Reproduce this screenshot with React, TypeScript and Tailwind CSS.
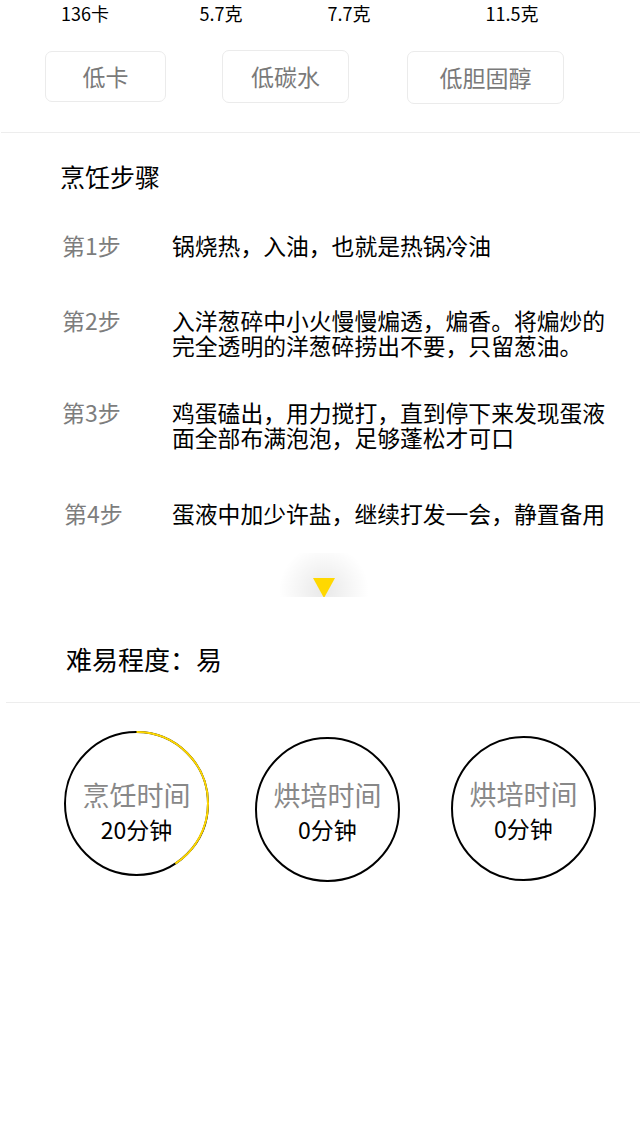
import React from "react";

const font = "font-['Noto_Sans_CJK_SC','Noto_Sans_CJK_JP',sans-serif]";

function Ring({ progress }: { progress?: number }) {
  const r = 71.5;
  const c = 2 * Math.PI * r;
  return (
    <svg width="145" height="145" viewBox="0 0 145 145" className="block">
      <circle cx="72.5" cy="72.5" r={r} fill="none" stroke="#000" strokeWidth="2" />
      {progress ? (
        <circle
          cx="72.5"
          cy="72.5"
          r={r}
          fill="none"
          stroke="#ffd800"
          strokeWidth="2"
          strokeDasharray={`${c * progress} ${c}`}
          transform="rotate(-90 72.5 72.5)"
        />
      ) : null}
    </svg>
  );
}

function TimeCircle({ title, value, progress, cls, pad }: { title: string; value: string; progress?: number; cls: string; pad: string }) {
  return (
    <div className={`relative w-[145px] h-[145px] ${cls}`}>
      <Ring progress={progress} />
      <div className={`absolute inset-0 flex flex-col items-center justify-center ${pad}`}>
        <div className="text-[27px] leading-[34px] text-[#888]">{title}</div>
        <div className="text-[23px] leading-[34px] text-black">{value}</div>
      </div>
    </div>
  );
}

const steps = [
  { label: "第1步", text: "锅烧热，入油，也就是热锅冷油", mt: "mt-[100px]" },
  { label: "第2步", text: "入洋葱碎中小火慢慢煸透，煸香。将煸炒的完全透明的洋葱碎捞出不要，只留葱油。", mt: "mt-[50px]" },
  { label: "第3步", text: "鸡蛋磕出，用力搅打，直到停下来发现蛋液面全部布满泡泡，足够蓬松才可口", mt: "mt-[42px]" },
  { label: "第4步", text: "蛋液中加少许盐，继续打发一会，静置备用", mt: "mt-[51px]" },
];

export default function App() {
  return (
    <div className={`w-[640px] h-[1122px] bg-white overflow-hidden ${font}`}>
      {/* nutrient values */}
      <div className="flex h-[26px] text-[18px] leading-[26px] text-black">
        <div className="w-[170px] text-center">136卡</div>
        <div className="w-[102px] text-center">5.7克</div>
        <div className="w-[154px] text-center">7.7克</div>
        <div className="w-[172px] text-center">11.5克</div>
      </div>

      {/* tags */}
      <div className="flex items-start mt-[24px] text-[23px] text-[#7a7a7a]">
        <div className="ml-[45px] mt-[1px] w-[121px] h-[51px] rounded-[7px] border border-[#ebebeb] flex items-center justify-center">低卡</div>
        <div className="ml-[56px] w-[127px] h-[53px] rounded-[7px] border border-[#ebebeb] flex items-center justify-center">低碳水</div>
        <div className="ml-[58px] mt-[1px] w-[157px] h-[53px] rounded-[7px] border border-[#ebebeb] flex items-center justify-center">低胆固醇</div>
      </div>

      <div className="mt-[28px] h-[1px] bg-[#ededed] ml-[1px]" />

      {/* steps */}
      <div className="relative">
        <div className="absolute left-[60px] top-[27px] text-[25px] leading-[32px] text-black">烹饪步骤</div>
        <div className="flex flex-col">
          {steps.map((s, i) => (
            <div key={i} className={`flex ${s.mt}`}>
              <div className={`w-[172px] text-[23px] leading-[25px] text-[#7d7d7d] ${i === 3 ? "pl-[64px]" : "pl-[62px]"}`}>{s.label}</div>
              <div className="w-[440px] text-[22.8px] leading-[25px] text-black">{s.text}</div>
            </div>
          ))}
        </div>
      </div>

      {/* expand arrow */}
      <div className="relative mt-[27px] h-[44px] overflow-hidden flex justify-center">
        <div className="absolute left-[279px] top-[-8px] w-[90px] h-[90px] rounded-full bg-[radial-gradient(closest-side,rgba(0,0,0,0.09),rgba(0,0,0,0.04)_55%,transparent)]" />
        <svg width="22" height="20" viewBox="0 0 22 20" className="relative mt-[25px] ml-[8px]">
          <polygon points="0,0 22,0 11,20" fill="#ffd800" />
        </svg>
      </div>

      {/* difficulty */}
      <div className="pl-[66px] mt-[45px] text-[26px] leading-[34px] text-black">难易程度：易</div>
      <div className="mt-[26px] ml-[6px] h-[1px] bg-[#ededed]" />

      {/* time circles */}
      <div className="flex items-start mt-[28px]">
        <TimeCircle title="烹饪时间" value="20分钟" progress={0.408} cls="ml-[64px]" pad="pt-[17px]" />
        <TimeCircle title="烘培时间" value="0分钟" cls="ml-[46px] mt-[6px]" pad="pt-[4px]" />
        <TimeCircle title="烘培时间" value="0分钟" cls="ml-[51px] mt-[5px]" pad="pt-[4px]" />
      </div>
    </div>
  );
}
